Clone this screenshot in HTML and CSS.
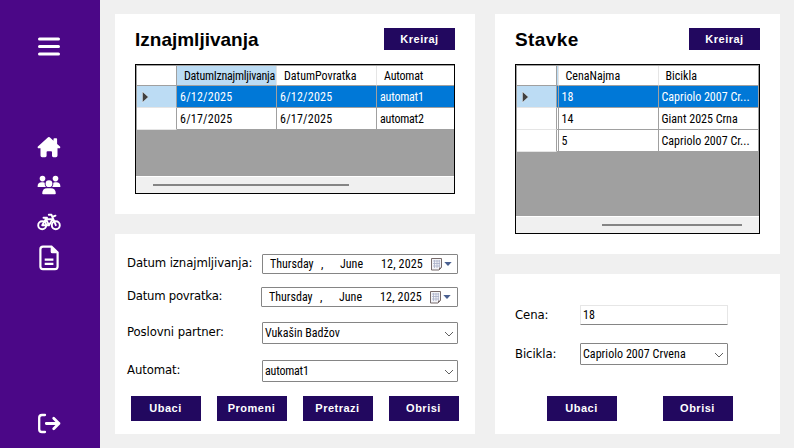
FILE: index.html
```
<!DOCTYPE html>
<html lang="sr">
<head>
<meta charset="utf-8">
<title>Iznajmljivanja</title>
<link rel="stylesheet" href="styles.css">
</head>
<body>
<div class="app">
  <nav class="sidebar">
    <svg class="icon menu" width="24" height="24" viewBox="0 0 24 24"><path d="M2.500 4h19M2.500 11.500h19M2.500 19h19" stroke="#fff" stroke-width="3" stroke-linecap="round"/></svg>
    <div class="links">
      <svg class="icon" width="24" height="22" viewBox="0 0 24 22"><path fill="#fff" d="M11.100 1.300a1.200 1.200 0 0 1 1.600 0L16.500 4.700V3.100q0-.8.8-.8h2q.8 0 .8.8v4.800l2.900 2.700q.5.600.2 1.100-.2.500-.8.500H20.500v7.400q0 1.600-1.600 1.600h-2.500q-1.400 0-1.400-1.400v-3.700q0-.9-.9-.9h-3.600q-.9 0-.9.900v3.700q0 1.400-1.400 1.400H5.100q-1.600 0-1.600-1.600v-7.400H1.600q-.7 0-.9-.5-.2-.6.200-1.100z"/></svg>
      <svg class="icon people" width="24" height="20" viewBox="0 0 24 20" fill="#fff"><circle cx="5.500" cy="3.600" r="2.800"/><circle cx="18.500" cy="3.600" r="2.800"/><path d="M.6 11.500c0-2.900 1.700-4.200 3.900-4.200h1.700q1 0 1.500.4-.4 2.400 1.200 4.300H1.100q-.5 0-.5-.5zM23.400 11.500c0-2.900-1.700-4.200-3.900-4.200h-1.700q-1 0-1.500.4.400 2.400-1.200 4.300h7.800q.5 0 .5-.5z"/><circle cx="12" cy="8.700" r="3.400"/><path d="M5.200 18.300c0-3.100 1.900-5 4.900-5h3.800c3 0 4.900 1.900 4.900 5q0 .9-.9.900H6.100q-.9 0-.9-.9z"/></svg>
      <svg class="icon bike" width="24" height="18" viewBox="0 0 24 18" fill="none" stroke="#fff" stroke-width="1.900" stroke-linejoin="round" stroke-linecap="round"><circle cx="5.200" cy="12.200" r="4"/><circle cx="18.800" cy="12.200" r="4"/><path d="M5.200 12.200 8.700 6.200h6.800M8.300 5l3.700 7.200H5.200M12 12.200l3.700-6M18.800 12.200 14.500 1.800h-2.700M6.500 4.700h3.500M15.200 4l3.300-1.300"/></svg>
      <svg class="icon file" width="22" height="26" viewBox="0 0 22 26"><path d="M5 1.600h8.500L19.600 7.500V21.600q0 2.600-2.600 2.600H5q-2.600 0-2.600-2.600V4.200q0-2.600 2.600-2.600z" fill="none" stroke="#fff" stroke-width="2.200"/><path d="M12.700 1.500v5.200q0 1.500 1.500 1.500h5.300z" fill="#fff"/><path d="M6.700 14.600h8.700M6.700 18.900h8.700" stroke="#fff" stroke-width="2.200"/></svg>
    </div>
    <svg class="icon logout" width="24" height="22" viewBox="0 0 24 22" fill="none" stroke="#fff" stroke-width="2.300" stroke-linecap="round" stroke-linejoin="round"><path d="M8 2H5Q2.200 2 2.200 4.800v11.400Q2.200 19 5 19h3"/><path d="M9.300 10.500H22M16.700 5.300l5.200 5.200-5.200 5.200" stroke-width="2.800"/></svg>
  </nav>

  <main class="column rentals">
    <section class="card list-card">
      <header class="card-head"><h1>Iznajmljivanja</h1><button class="btn create">Kreiraj</button></header>
      <div class="grid">
        <div class="rows">
          <div class="row head"><span class="cell"></span><span class="cell active tight">DatumIznajmljivanja</span><span class="cell">DatumPovratka</span><span class="cell snug">Automat</span></div>
          <div class="row selected"><span class="cell"><svg width="7" height="12" viewBox="0 0 7 12"><path d="M.5.700v10.600L6.300 6z" fill="#404040" stroke="#fff" stroke-width=".4"/></svg></span><span class="cell date">6/12/2025</span><span class="cell date">6/12/2025</span><span class="cell snug">automat1</span></div>
          <div class="row"><span class="cell"></span><span class="cell date">6/17/2025</span><span class="cell date">6/17/2025</span><span class="cell snug">automat2</span></div>
        </div>
        <div class="scrollbar"><i class="thumb"></i></div>
      </div>
    </section>

    <section class="card rental-form">
      <div class="field"><label>Datum iznajmljivanja:</label>
        <div class="input picker"><span class="day">Thursday</span><span class="comma">,</span><span class="month">June</span><span class="year">12, 2025</span>
          <svg class="cal" width="22" height="13" viewBox="0 0 22 13"><path d="M.5.5h10v9l-2.500 2.500H.5z" fill="#f4f4f8" stroke="#776b6b"/><path d="M2 3h7M2 5.500h7M2 8h7M3.500 2v8M6 2v8M8.300 2v7" stroke="#a9b0c8" stroke-width=".8"/><path d="M10.500 9.500 8 12V9.500z" fill="#776b6b"/><path d="M13.300 4h7.400L17 8z" fill="#4a6090"/></svg></div></div>
      <div class="field second"><label class="return">Datum povratka:</label>
        <div class="input picker wide"><span class="day">Thursday</span><span class="comma">,</span><span class="month">June</span><span class="year">12, 2025</span>
          <svg class="cal" width="22" height="13" viewBox="0 0 22 13"><path d="M.5.5h10v9l-2.500 2.500H.5z" fill="#f4f4f8" stroke="#776b6b"/><path d="M2 3h7M2 5.500h7M2 8h7M3.500 2v8M6 2v8M8.300 2v7" stroke="#a9b0c8" stroke-width=".8"/><path d="M10.500 9.500 8 12V9.500z" fill="#776b6b"/><path d="M13.300 4h7.400L17 8z" fill="#4a6090"/></svg></div></div>
      <div class="field third"><label>Poslovni partner:</label><div class="input combo"><span>Vukašin Badžov</span><svg width="10" height="6" viewBox="0 0 10 6"><path d="m1 1 4 4 4-4" fill="none" stroke="#606060"/></svg></div></div>
      <div class="field fourth"><label>Automat:</label><div class="input combo"><span class="snug">automat1</span><svg width="10" height="6" viewBox="0 0 10 6"><path d="m1 1 4 4 4-4" fill="none" stroke="#606060"/></svg></div></div>
      <div class="actions"><button class="btn">Ubaci</button><button class="btn">Promeni</button><button class="btn">Pretrazi</button><button class="btn">Obrisi</button></div>
    </section>
  </main>

  <aside class="column items">
    <section class="card items-card">
      <header class="card-head"><h1 class="loose">Stavke</h1><button class="btn create">Kreiraj</button></header>
      <div class="grid scrolled">
        <div class="rows">
          <div class="row head"><span class="cell"></span><span class="cell sliver active"></span><span class="cell">CenaNajma</span><span class="cell">Bicikla</span></div>
          <div class="row selected"><span class="cell"><svg width="7" height="12" viewBox="0 0 7 12"><path d="M.5.700v10.600L6.300 6z" fill="#404040" stroke="#fff" stroke-width=".4"/></svg></span><span class="cell sliver"></span><span class="cell">18</span><span class="cell">Capriolo 2007 Cr...</span></div>
          <div class="row"><span class="cell"></span><span class="cell sliver"></span><span class="cell">14</span><span class="cell">Giant 2025 Crna</span></div>
          <div class="row"><span class="cell"></span><span class="cell sliver"></span><span class="cell">5</span><span class="cell">Capriolo 2007 Cr...</span></div>
        </div>
        <div class="scrollbar"><i class="thumb"></i></div>
      </div>
    </section>

    <section class="card item-form">
      <div class="field"><label>Cena:</label><div class="input text">18</div></div>
      <div class="field bike-field"><label>Bicikla:</label><div class="input combo"><span class="spread">Capriolo 2007 Crvena</span><svg width="10" height="6" viewBox="0 0 10 6"><path d="m1 1 4 4 4-4" fill="none" stroke="#606060"/></svg></div></div>
      <div class="actions"><button class="btn">Ubaci</button><button class="btn">Obrisi</button></div>
    </section>
  </aside>
</div>
</body>
</html>
```
FILE: styles.css
```
* { box-sizing: border-box; }
body { margin: 0; background: #f0f0f0; color: #000; font: condensed 12px Roboto, "Liberation Sans", sans-serif; }
svg { display: block; flex: none; }
.app { display: flex; width: 794px; height: 448px; overflow: hidden; }

.sidebar { width: 100px; background: #4b0787; display: flex; flex-direction: column; padding: 35px 0 13px 37px; }
.links { margin-top: 77px; display: flex; flex-direction: column; }
.people { margin-top: 17px; }
.bike { margin-top: 18px; }
.file { margin: 14px 0 0 1px; }
.logout { margin-top: auto; }

.column { display: flex; flex-direction: column; gap: 20px; padding-top: 14px; }
.rentals { width: 360px; margin-left: 15px; }
.items { width: 285px; margin-left: 20px; }
.card { background: #fff; }
.list-card { height: 200px; padding: 14px 20px 0; }
.rental-form { height: 200px; padding: 20px 16px 0 12px; }
.items-card { height: 240px; padding: 14px 20px 0; }
.item-form { height: 160px; padding: 31px 20px 0; }

.card-head { display: flex; justify-content: space-between; height: 36px; }
h1 { margin: 0; font: bold 19px/24px "Liberation Sans", sans-serif; }
.loose { letter-spacing: .4px; }
.btn { border: 0; padding: 0 1px 1px 0; margin: 0; width: 70px; height: 25px; background: #22085f; color: #fff; font: bold 11px "Liberation Sans", sans-serif; letter-spacing: .5px; text-align: center; }
.create { width: 71px; height: 22px; padding: 0; }

.grid { border: 1px solid #000; background: #a0a0a0; height: 130px; display: flex; flex-direction: column; }
.scrolled { height: 170px; }
.rows { padding-left: 1px; border-top: 1px solid #a0a0a0; overflow: hidden; }
.row { display: grid; grid-template-columns: 40px 100px 100px 77px; height: 22px; }
.head { height: 20px; }
.scrolled .rows { padding-right: 1px; }
.scrolled .row { grid-template-columns: 40px 2px 100px 99px; }
.cell { background: #fff; border-right: 1px solid #a0a0a0; border-bottom: 1px solid #a0a0a0; padding-left: 3px; display: flex; align-items: center; white-space: nowrap; overflow: hidden; }
.cell:last-child { border-right: 0; }
.cell:first-child { padding-left: 5px; }
.head .cell { padding: 0 0 0 7px; border-right-color: #e5e5e5; }
.head .cell:first-child { border-right-color: #a0a0a0; }
.scrolled .cell:nth-child(n+3) { padding-left: 2.5px; }
.scrolled .head .cell:nth-child(n+3) { padding-left: 6.5px; }
.row .sliver { padding: 0; }
.head .active { background: #bcdcf4; }
.selected .cell { background: #0078d7; color: #fff; }
.selected .cell:first-child { background: #bcdcf4; }
.row:not(.head) .cell:first-child { border-bottom-color: #e5e5e5; }
.tight { letter-spacing: -.25px; }
.snug { letter-spacing: -.2px; }
.date { letter-spacing: .22px; }
.scrollbar { margin-top: auto; height: 17px; border-top: 1px solid #fff; background: #f0f0f0; padding: 7px 0 0 17px; }
.thumb { display: block; width: 196px; height: 2px; background: #858585; }
.scrolled .scrollbar { padding-left: 86px; }
.scrolled .thumb { width: 140px; }

.field { display: flex; justify-content: space-between; align-items: center; }
.second { margin-top: 13px; }
.third { margin-top: 15px; }
.fourth { margin-top: 16px; }
label { font: condensed 13px/16px "DejaVu Sans", sans-serif; letter-spacing: -.1px; padding-bottom: 2px; white-space: nowrap; }
.return { letter-spacing: -.25px; }
.item-form label { padding-bottom: 0; }
.input { width: 197px; height: 20px; border: 1px solid #858585; border-radius: 1px; background: #fff; display: flex; align-items: center; white-space: nowrap; }
.rental-form .input { width: 196px; }
.rental-form .wide { width: 197px; }
.rental-form .field { padding-right: 1px; }
.picker { padding-left: 7px; }
.day { width: 51px; }
.comma { width: 19px; }
.month { width: 41px; }
.year { width: 50px; letter-spacing: .15px; }
.combo, .rental-form .combo { height: 22px; justify-content: space-between; padding: 0 3px 1px 2px; }
.combo svg { margin-top: 2px; }
.item-form .input { width: 148px; margin-right: 32px; }
.text { border-color: #e6e6e6 #e6e6e6 #858585; padding: 0 0 1px 2px; }
.bike-field { margin-top: 18px; }
.spread { letter-spacing: .05px; }
.actions { display: flex; gap: 16px; margin: 14px 0 0 4px; }
.item-form .actions { gap: 46px; margin: 31px 0 0 32px; }
```
